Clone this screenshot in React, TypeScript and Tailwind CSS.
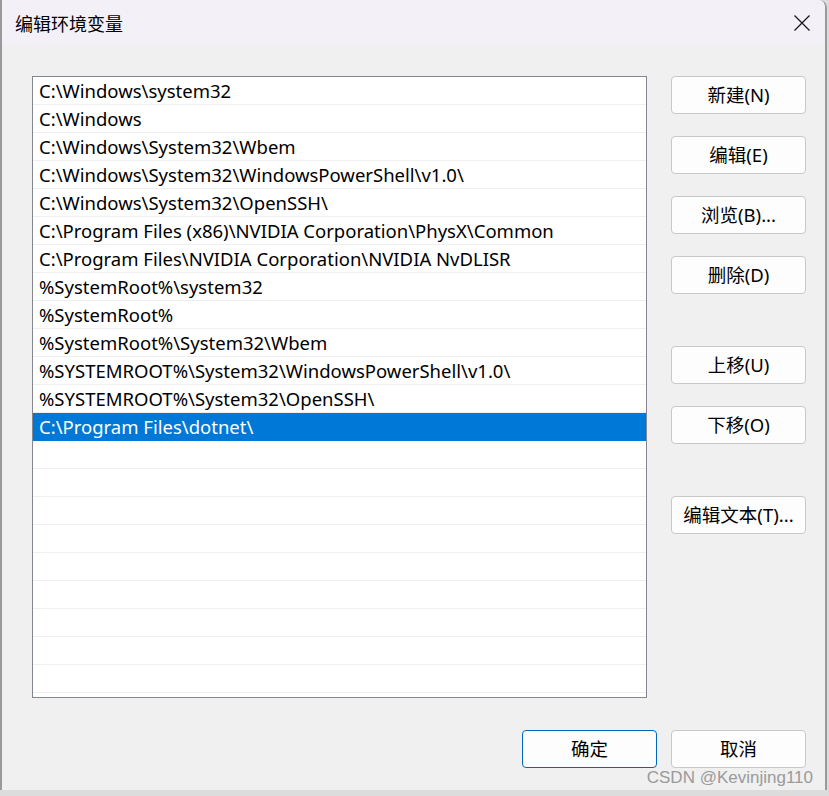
import React from "react";

const rows = [
  "C:\\Windows\\system32",
  "C:\\Windows",
  "C:\\Windows\\System32\\Wbem",
  "C:\\Windows\\System32\\WindowsPowerShell\\v1.0\\",
  "C:\\Windows\\System32\\OpenSSH\\",
  "C:\\Program Files (x86)\\NVIDIA Corporation\\PhysX\\Common",
  "C:\\Program Files\\NVIDIA Corporation\\NVIDIA NvDLISR",
  "%SystemRoot%\\system32",
  "%SystemRoot%",
  "%SystemRoot%\\System32\\Wbem",
  "%SYSTEMROOT%\\System32\\WindowsPowerShell\\v1.0\\",
  "%SYSTEMROOT%\\System32\\OpenSSH\\",
  "C:\\Program Files\\dotnet\\",
];

const font = { fontFamily: '"Noto Sans", "Noto Sans CJK SC", sans-serif' };

function Btn({ label, primary = false, className = "" }: { label: string; primary?: boolean; className?: string }) {
  return (
    <div
      className={
        "w-[135px] h-[38px] rounded-[4px] bg-[#fdfdfd] flex items-center justify-center text-[18.5px] text-black " +
        (primary ? "border border-[#0067c0]" : "border border-[#c8c8c8]") +
        " " +
        className
      }
    >
      {label}
    </div>
  );
}

export default function App() {
  const empty = Array.from({ length: 9 });
  return (
    <div className="w-[829px] h-[796px] bg-[#dcdcdc] overflow-hidden" style={font}>
      <div className="relative w-[827px] h-[790px] bg-[#f0f0f0] border-l-2 border-r-2 border-[#9a9a9a] rounded-tr-[8px] overflow-hidden flex flex-col">
        <div className="h-[45px] shrink-0 bg-[#f3f0f7] flex items-center justify-between pl-[13px] pr-[14px]">
          <span className="text-[18px] text-black leading-none" style={{ fontFamily: '"Noto Sans CJK SC", sans-serif' }}>
            编辑环境变量
          </span>
          <svg width="18" height="18" viewBox="0 0 18 18" className="mt-[1px]">
            <path d="M1.5 1.5 L16.5 16.5 M16.5 1.5 L1.5 16.5" stroke="#1a1a1a" strokeWidth="1.3" />
          </svg>
        </div>
        <div className="flex pl-[30px] pt-[31px]">
          <div className="w-[615px] h-[622px] border border-[#828790] bg-white overflow-hidden flex flex-col">
            {rows.map((r, i) => {
              const sel = i === rows.length - 1;
              return (
                <div
                  key={i}
                  className={
                    "h-[28px] shrink-0 flex items-center pl-[6px] text-[18.5px] whitespace-nowrap " +
                    (sel ? "bg-[#0078d7] text-white" : "text-black border-b border-[#efefef]")
                  }
                >
                  {r}
                </div>
              );
            })}
            {empty.map((_, i) => (
              <div key={"e" + i} className="h-[28px] shrink-0 border-b border-[#efefef]" />
            ))}
          </div>
          <div className="ml-[24px] flex flex-col">
            <Btn label="新建(N)" />
            <Btn label="编辑(E)" className="mt-[22px]" />
            <Btn label="浏览(B)..." className="mt-[22px]" />
            <Btn label="删除(D)" className="mt-[22px]" />
            <Btn label="上移(U)" className="mt-[52px]" />
            <Btn label="下移(O)" className="mt-[22px]" />
            <Btn label="编辑文本(T)..." className="mt-[52px]" />
          </div>
        </div>
        <div className="flex justify-end gap-[14px] pr-[19px] mt-[32px]">
          <Btn label="确定" primary />
          <Btn label="取消" />
        </div>
        <div className="absolute right-[12px] bottom-[4px] text-[17px] text-[#9a9a9a] leading-none" style={{ fontFamily: '"Liberation Sans", sans-serif' }}>
          CSDN @Kevinjing110
        </div>
      </div>
    </div>
  );
}
